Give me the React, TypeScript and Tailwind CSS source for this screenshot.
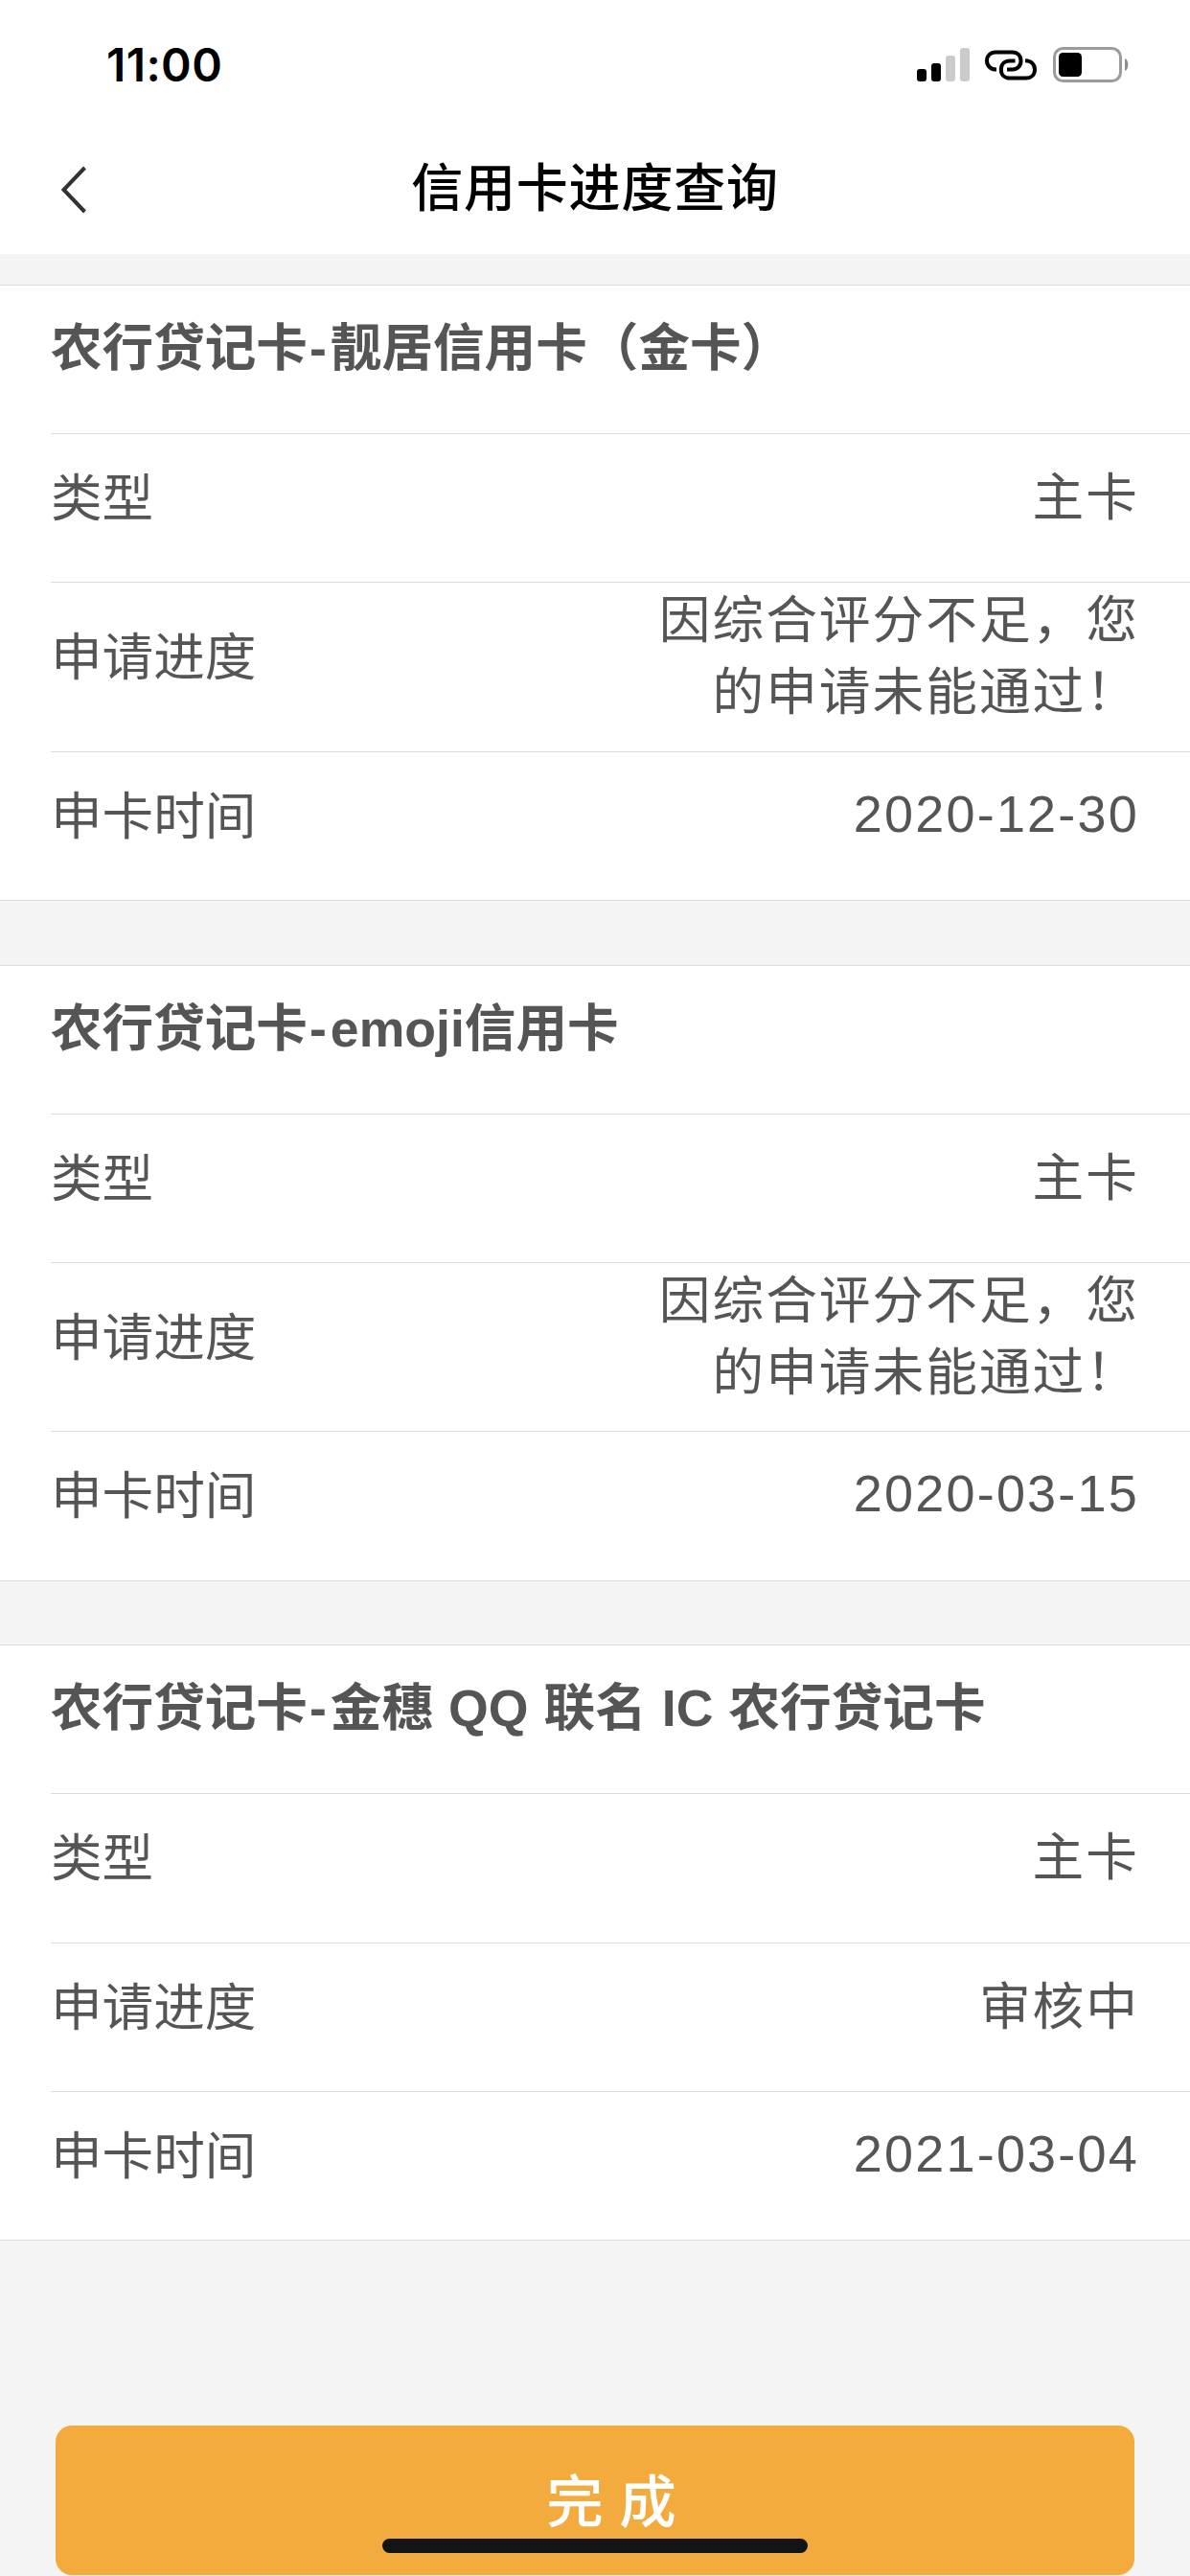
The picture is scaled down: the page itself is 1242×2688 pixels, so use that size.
import React from 'react'

type CardRecord = {
  bank: string
  name: string
  type: string
  progress: string[]
  date: string
}

const RECORDS: CardRecord[] = [
  { bank: '农行贷记卡', name: '靓居信用卡（金卡）', type: '主卡', progress: ['因综合评分不足，您', '的申请未能通过！'], date: '2020-12-30' },
  { bank: '农行贷记卡', name: 'emoji信用卡', type: '主卡', progress: ['因综合评分不足，您', '的申请未能通过！'], date: '2020-03-15' },
  { bank: '农行贷记卡', name: '金穗 QQ 联名 IC 农行贷记卡', type: '主卡', progress: ['审核中'], date: '2021-03-04' },
]

const StatusBar = () => (
  <div className="flex h-[132px] items-start justify-between pl-[111px] pr-[63px]">
    <span className="mt-[39px] font-['Inter',sans-serif] text-[48px] font-semibold leading-[58px] tracking-[0.4px] text-black">11:00</span>
    <div className="mt-[49px] flex items-start">
      <svg className="mt-px mr-[16px]" width="55" height="35" viewBox="0 0 55 35">
        <rect x="0" y="22" width="10" height="13" rx="3" fill="#000" />
        <rect x="15" y="16" width="10" height="19" rx="3" fill="#000" />
        <rect x="30" y="8" width="10" height="27" rx="3" fill="#cbcbcb" />
        <rect x="45" y="0" width="10" height="35" rx="3" fill="#cbcbcb" />
      </svg>
      <svg className="mt-[3px] mr-[17px]" width="54" height="33" viewBox="0 0 54 33" fill="none" stroke="#000" strokeWidth="4">
        <path d="M12 20.6C6 20.6 2 16.6 2 11.4C2 6 6 2.4 11 2.4H28.5C34 2.4 37.5 6 37.5 11.4C37.5 16.6 34 20.6 28.5 20.6H23" />
        <path d="M31.5 11.4H26C20.5 11.4 16.8 15 16.8 20.4C16.8 26 20.5 29.6 26 29.6H42.5C48.2 29.6 52 26 52 20.4C52 15 48.2 11.4 42 11.2" />
      </svg>
      <svg width="80" height="37" viewBox="0 0 80 37">
        <rect x="1.5" y="1.5" width="69" height="34" rx="9" fill="none" stroke="#9b9b9b" strokeWidth="3" />
        <rect x="6" y="6" width="24" height="25" rx="4.5" fill="#000" />
        <path d="M75 12C79.5 14 79.5 23 75 25Z" fill="#8c8c8c" />
      </svg>
    </div>
  </div>
)

const Header = () => (
  <div className="grid h-[133px] grid-cols-[200px_1fr_200px] items-center">
    <svg className="ml-[62px] mb-px" width="32" height="52" viewBox="0 0 32 52" fill="none">
      <path d="M26.5 3L4.5 26L26.5 49" stroke="#333" strokeWidth="4" />
    </svg>
    <h1 className="mb-[3px] text-center text-[54px] font-medium leading-[80px] tracking-[0.8px] text-black">信用卡进度查询</h1>
  </div>
)

type RowProps = {
  label: string
  tall?: boolean
  children: React.ReactNode
}

const Row = ({ label, tall = false, children }: RowProps) => (
  <div className={`flex justify-between border-t border-[#dcdcdc] pr-[53px] ${tall ? 'h-[176.5px]' : 'h-[155.2px]'}`}>
    <span className={`text-[53.6px] leading-[80px] ${tall ? 'mt-[38px]' : 'mt-[27px]'}`}>{label}</span>
    <div className={`text-right text-[53.7px] tracking-[2px] leading-[75px] ${tall ? 'mt-[2px]' : 'mt-[29px]'}`}>{children}</div>
  </div>
)

const Card = ({ record }: { record: CardRecord }) => (
  <section className="border-y border-[#dcdcdc] bg-white pl-[53px] text-[#555]">
    <h2 className="h-[154.2px] pt-[25px] text-[53.6px] font-bold leading-[80px] [word-spacing:1.2px]">
      {record.bank}
      <span className="ml-[2px] mr-[4px]">-</span>
      {record.name}
    </h2>
    <Row label="类型">{record.type}</Row>
    <Row label="申请进度" tall={record.progress.length > 1}>
      {record.progress.map((line) => (
        <div key={line}>{line}</div>
      ))}
    </Row>
    <Row label="申卡时间">
      <div className="-mt-[2px] text-[54px] tracking-[2.2px]">{record.date}</div>
    </Row>
  </section>
)

const App = () => {
  return (
    <div className="relative flex h-[2688px] w-[1242px] flex-col overflow-hidden bg-[#f4f4f4] font-['Liberation_Sans','Noto_Sans_CJK_SC',sans-serif]">
      <header className="bg-white">
        <StatusBar />
        <Header />
      </header>

      <main className="mt-8 flex flex-col gap-[66.5px]">
        {RECORDS.map((record) => (
          <Card key={record.name} record={record} />
        ))}
      </main>

      <button className="mx-[58px] mt-auto mb-px h-[156px] rounded-[17px] bg-[#f2ab3c] pl-[34px] pt-[6px] text-[59.5px] font-medium text-white">
        完 成
      </button>

      {/* Home indicator */}
      <div className="absolute bottom-6 left-[399px] h-[15px] w-[444px] rounded-full bg-[#141414]" />
    </div>
  )
}

export default App
